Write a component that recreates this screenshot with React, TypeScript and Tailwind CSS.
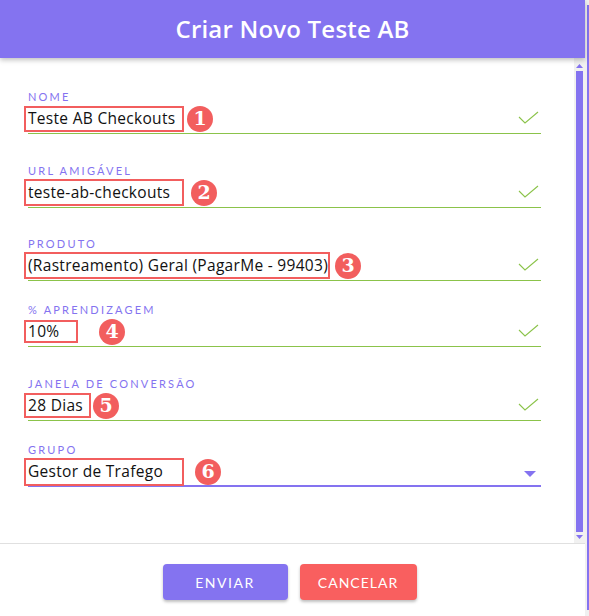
import React from 'react';

type Field = {
    label: string;
    value: string;
    mt: string;
    box: string;
    badge: string;
    n: string;
    select?: boolean;
};

const fields: Field[] = [
    { label: 'NOME', value: 'Teste AB Checkouts', mt: 'mt-[32px]', box: 'w-[160px] h-[26px]', badge: 'ml-[3px]', n: '1' },
    { label: 'URL AMIGÁVEL', value: 'teste-ab-checkouts', mt: 'mt-[30px]', box: 'w-[160px] h-[27px]', badge: 'ml-[7px]', n: '2' },
    { label: 'PRODUTO', value: '(Rastreamento) Geral (PagarMe - 99403)', mt: 'mt-[29px]', box: 'w-[306px] h-[27px]', badge: 'ml-[5px]', n: '3' },
    { label: '% APRENDIZAGEM', value: '10%', mt: 'mt-[22px]', box: 'w-[54px] h-[23px]', badge: 'ml-[21px]', n: '4' },
    { label: 'JANELA DE CONVERSÃO', value: '28 Dias', mt: 'mt-[30px]', box: 'w-[67px] h-[25px]', badge: 'ml-[2px]', n: '5' },
    { label: 'GRUPO', value: 'Gestor de Trafego', mt: 'mt-[22px]', box: 'w-[160px] h-[28px]', badge: 'ml-[11px]', n: '6', select: true },
];

function Check() {
    return (
        <svg width="22" height="14" viewBox="0 0 22 14" className="mr-[1px] -mt-[2px]">
            <polyline points="1,6 7,12 20,1" fill="none" stroke="#8bc34a" strokeWidth="1.1" />
        </svg>
    );
}

function FormField({ f }: { f: Field }) {
    return (
        <div className={`${f.mt} w-[513px]`}>
            <div className="h-[14px] text-[11px] leading-[14px] tracking-[2.2px] text-[#8473f0]">{f.label}</div>
            <div className="h-[29px] -ml-[4px] flex items-center">
                <div className={`${f.box} border-2 border-[#f25e5e] flex items-center pl-[2px] shrink-0`}>
                    <span className="text-[15.5px] tracking-[0.3px] text-[#111] whitespace-nowrap" style={{ fontFamily: '"Open Sans", sans-serif' }}>{f.value}</span>
                </div>
                <div className={`${f.badge} w-[26px] h-[26px] rounded-full bg-[#f25e5e] flex items-center justify-center shrink-0`}>
                    <span className="text-white text-[19px] font-bold leading-none" style={{ fontFamily: '"DejaVu Serif", serif' }}>{f.n}</span>
                </div>
                <div className="flex-1" />
                {f.select ? (
                    <svg width="12" height="6" viewBox="0 0 12 6" className="mr-[5px] mt-[4px]">
                        <polygon points="0,0 12,0 6,6" fill="#8473f0" />
                    </svg>
                ) : (
                    <Check />
                )}
            </div>
            {f.select ? (
                <div className="h-[2px] bg-[#8473f0] -mt-[1px]" />
            ) : (
                <div className="h-[1px] bg-[#8bc34a]" />
            )}
        </div>
    );
}

export default function App() {
    return (
        <div className="w-[589px] h-[616px] flex bg-white overflow-hidden" style={{ fontFamily: 'Lato, "Noto Sans", sans-serif' }}>
            <div className="w-[585px] h-full flex flex-col">
                <div className="h-[58px] bg-[#8473f0] flex items-center justify-center shadow-[0_2px_5px_rgba(0,0,0,0.25)] relative z-10">
                    <h1 className="text-white text-[24px] font-semibold tracking-[0.2px]" style={{ fontFamily: '"Open Sans", sans-serif' }}>Criar Novo Teste AB</h1>
                </div>
                <div className="h-[485px] flex">
                    <div className="flex-1 pl-[28px] flex flex-col">
                        {fields.map((f) => (
                            <FormField key={f.label} f={f} />
                        ))}
                    </div>
                    <div className="w-[11px] bg-[#f1f1f1] flex flex-col items-center pt-[6px] pb-[4px]">
                        <svg width="7" height="4" viewBox="0 0 7 4">
                            <polygon points="0,4 7,4 3.5,0" fill="#8473f0" />
                        </svg>
                        <div className="w-[7px] flex-1 bg-[#8473f0] my-[3px]" />
                        <svg width="7" height="4" viewBox="0 0 7 4">
                            <polygon points="0,0 7,0 3.5,4" fill="#8473f0" />
                        </svg>
                    </div>
                </div>
                <div className="flex-1 border-t border-[#e0e0e0] flex justify-center gap-[12px] pt-[20px] pr-[6px]">
                    <button className="w-[125px] h-[36px] rounded-[4px] bg-[#8473f0] text-white text-[14px] tracking-[1.5px] shadow-[0_2px_3px_rgba(0,0,0,0.25)]">
                        ENVIAR
                    </button>
                    <button className="w-[117px] h-[36px] rounded-[4px] bg-[#f95f5f] text-white text-[14px] tracking-[1px] shadow-[0_2px_3px_rgba(0,0,0,0.25)]">
                        CANCELAR
                    </button>
                </div>
            </div>
            <div className="w-[4px] h-full bg-[#f0f0f0] flex justify-end pt-[5px] pb-[6px]">
                <div className="w-[2px] h-full bg-[#8473f0]" />
            </div>
        </div>
    );
}
